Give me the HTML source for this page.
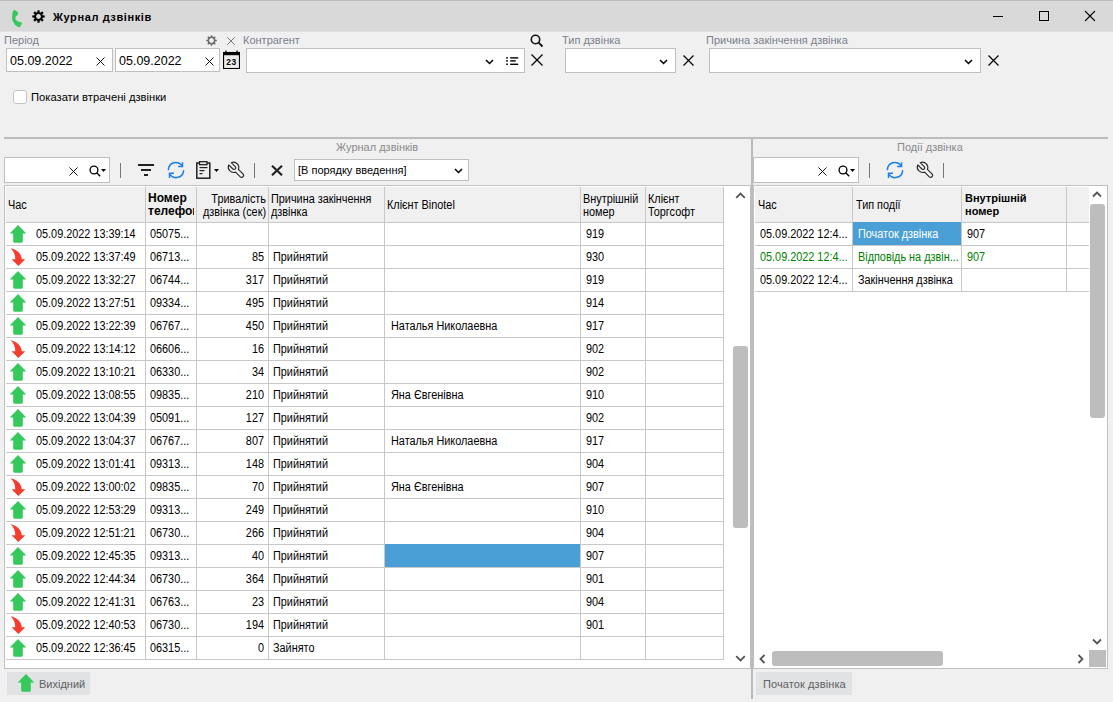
<!DOCTYPE html>
<html><head><meta charset="utf-8">
<style>
*{margin:0;padding:0;box-sizing:border-box}
html,body{width:1113px;height:702px;overflow:hidden;background:#f0f0f0;font-family:"Liberation Sans",sans-serif;font-size:11px;color:#000}
.a{position:absolute}
.t{position:absolute;white-space:nowrap;line-height:13px}
.lbl{color:#7b7f8e}
.inp{position:absolute;background:#fff;border:1px solid #bfbfbf}
.vl{position:absolute;background:#c8c8c8;width:1px}
.hl{position:absolute;background:#c8c8c8;height:1px}
.ar{position:absolute}
.c{position:absolute;white-space:nowrap;line-height:13px;font-size:12px;transform:scaleX(0.905);transform-origin:0 0}
.cr{position:absolute;white-space:nowrap;line-height:13px;font-size:12px;transform:scaleX(0.905);transform-origin:100% 0;text-align:right}
</style></head><body>

<div class="a" style="left:0;top:0;width:1113px;height:32px;background:#d9d9d9;border-top:1px solid #bbbbbb;border-bottom:1px solid #e2e2e2"></div>
<svg class="a" style="left:6px;top:6px" width="24" height="24" viewBox="0 0 24 24"><path d="M8.2 3.8 L12 6.2 Q12.3 7.2 11.6 8.9 L9.9 10.3 Q9 11.5 9.5 13 Q10.2 14.8 12 15.4 L15.7 16.4 Q16.2 17.3 15.7 18.1 L13.7 21.2 Q12.3 21 11.3 20.5 Q8.5 18.8 7.2 16 Q6 13.5 6.1 11 Q6.2 7.8 6.8 5.8 Q7.3 4.2 8.2 3.8 Z" fill="#35c85a"/></svg>
<svg class="a" style="left:32px;top:10px" width="13" height="13" viewBox="0 0 13 13"><circle cx="6.5" cy="6.5" r="4.4" fill="#000"/><rect x="5.4" y="0.2999999999999998" width="2.2" height="3.3" fill="#000" transform="rotate(0.0 6.5 6.5)"/><rect x="5.4" y="0.2999999999999998" width="2.2" height="3.3" fill="#000" transform="rotate(45.0 6.5 6.5)"/><rect x="5.4" y="0.2999999999999998" width="2.2" height="3.3" fill="#000" transform="rotate(90.0 6.5 6.5)"/><rect x="5.4" y="0.2999999999999998" width="2.2" height="3.3" fill="#000" transform="rotate(135.0 6.5 6.5)"/><rect x="5.4" y="0.2999999999999998" width="2.2" height="3.3" fill="#000" transform="rotate(180.0 6.5 6.5)"/><rect x="5.4" y="0.2999999999999998" width="2.2" height="3.3" fill="#000" transform="rotate(225.0 6.5 6.5)"/><rect x="5.4" y="0.2999999999999998" width="2.2" height="3.3" fill="#000" transform="rotate(270.0 6.5 6.5)"/><rect x="5.4" y="0.2999999999999998" width="2.2" height="3.3" fill="#000" transform="rotate(315.0 6.5 6.5)"/><circle cx="6.5" cy="6.5" r="2.4" fill="#d9d9d9"/></svg>
<div class="t" style="left:53px;top:11px;font-size:11px;font-weight:bold;letter-spacing:0.6px">Журнал дзвінків</div>
<div class="a" style="left:993px;top:16px;width:10px;height:1px;background:#000"></div>
<div class="a" style="left:1039px;top:11px;width:10px;height:10px;border:1px solid #000"></div>
<svg class="a" style="left:1084px;top:10px" width="12" height="12" viewBox="0 0 12 12"><path d="M1 1 L11 11 M11 1 L1 11" stroke="#000" stroke-width="1.1"/></svg>
<div class="t lbl" style="left:4px;top:34px">Період</div>
<svg class="a" style="left:206px;top:35px" width="11" height="11" viewBox="0 0 11 11"><circle cx="5.5" cy="5.5" r="3.2" stroke="#6a6a6a" stroke-width="1.5" fill="none"/><rect x="4.8" y="0.2" width="1.4" height="2.6" fill="#6a6a6a" transform="rotate(0 5.5 5.5)"/><rect x="4.8" y="0.2" width="1.4" height="2.6" fill="#6a6a6a" transform="rotate(45 5.5 5.5)"/><rect x="4.8" y="0.2" width="1.4" height="2.6" fill="#6a6a6a" transform="rotate(90 5.5 5.5)"/><rect x="4.8" y="0.2" width="1.4" height="2.6" fill="#6a6a6a" transform="rotate(135 5.5 5.5)"/><rect x="4.8" y="0.2" width="1.4" height="2.6" fill="#6a6a6a" transform="rotate(180 5.5 5.5)"/><rect x="4.8" y="0.2" width="1.4" height="2.6" fill="#6a6a6a" transform="rotate(225 5.5 5.5)"/><rect x="4.8" y="0.2" width="1.4" height="2.6" fill="#6a6a6a" transform="rotate(270 5.5 5.5)"/><rect x="4.8" y="0.2" width="1.4" height="2.6" fill="#6a6a6a" transform="rotate(315 5.5 5.5)"/></svg>
<svg class="a" style="left:227px;top:37px" width="8" height="8" viewBox="0 0 8 8"><path d="M0.3 0.3 L7.7 7.7 M7.7 0.3 L0.3 7.7" stroke="#7a7a7a" stroke-width="1"/></svg>
<div class="t lbl" style="left:243px;top:34px">Контрагент</div>
<div class="t lbl" style="left:562px;top:34px">Тип дзвінка</div>
<div class="t lbl" style="left:706px;top:34px">Причина закінчення дзвінка</div>
<svg class="a" style="left:530px;top:34px" width="14" height="14" viewBox="0 0 14 14"><circle cx="5.5" cy="5.5" r="4.2" stroke="#111" stroke-width="1.6" fill="none"/><path d="M8.6 8.6 L12.5 12.5" stroke="#111" stroke-width="1.8"/></svg>
<div class="inp" style="left:6px;top:48px;width:107px;height:24px"></div>
<div class="t" style="left:10px;top:54px;font-size:12.5px;line-height:14px">05.09.2022</div>
<svg class="a" style="left:96px;top:57px" width="9" height="9" viewBox="0 0 9 9"><path d="M0.5 0.5 L8.5 8.5 M8.5 0.5 L0.5 8.5" stroke="#111" stroke-width="1.0"/></svg>
<div class="inp" style="left:115px;top:48px;width:105px;height:24px"></div>
<div class="t" style="left:119px;top:54px;font-size:12.5px;line-height:14px">05.09.2022</div>
<svg class="a" style="left:205px;top:57px" width="9" height="9" viewBox="0 0 9 9"><path d="M0.5 0.5 L8.5 8.5 M8.5 0.5 L0.5 8.5" stroke="#111" stroke-width="1.0"/></svg>
<svg class="a" style="left:223px;top:50px" width="17" height="19" viewBox="0 0 17 19"><rect x="0.55" y="2.5" width="15.9" height="16" fill="#ececec" stroke="#000" stroke-width="1.1"/><rect x="0" y="2" width="17" height="3.2" fill="#000"/><rect x="2.3" y="0.6" width="1.3" height="2" fill="#000"/><rect x="13.4" y="0.6" width="1.3" height="2" fill="#000"/><text x="8.6" y="15" font-family="Liberation Sans" font-weight="bold" font-size="8.4" letter-spacing="0.7" text-anchor="middle" fill="#000">23</text></svg>
<div class="inp" style="left:246px;top:48px;width:279px;height:25px"></div>
<svg class="a" style="left:485px;top:59px" width="9" height="6" viewBox="0 0 9 6"><path d="M1 1 L4.5 4.5 L8 1" stroke="#000" stroke-width="1.5" fill="none"/></svg>
<svg class="a" style="left:505px;top:54px" width="15" height="13" viewBox="0 0 15 13"><rect x="1.2" y="3.1" width="1.6" height="1.6" fill="#000"/><rect x="1.2" y="6.1" width="1.6" height="1.6" fill="#000"/><rect x="1.2" y="9.5" width="1.6" height="1.6" fill="#000"/><rect x="5.2" y="3.2" width="8" height="1.4" fill="#000"/><rect x="5.2" y="6.2" width="5.5" height="1.4" fill="#000"/><rect x="5.2" y="9.6" width="8" height="1.4" fill="#000"/></svg>
<svg class="a" style="left:531px;top:54px" width="12" height="12" viewBox="0 0 12 12"><path d="M0.5 0.5 L11.5 11.5 M11.5 0.5 L0.5 11.5" stroke="#000" stroke-width="1.2"/></svg>
<div class="inp" style="left:565px;top:48px;width:111px;height:25px"></div>
<svg class="a" style="left:659px;top:59px" width="9" height="6" viewBox="0 0 9 6"><path d="M1 1 L4.5 4.5 L8 1" stroke="#000" stroke-width="1.5" fill="none"/></svg>
<svg class="a" style="left:683px;top:55px" width="11" height="11" viewBox="0 0 11 11"><path d="M0.5 0.5 L10.5 10.5 M10.5 0.5 L0.5 10.5" stroke="#000" stroke-width="1.2"/></svg>
<div class="inp" style="left:709px;top:48px;width:272px;height:25px"></div>
<svg class="a" style="left:964px;top:59px" width="9" height="6" viewBox="0 0 9 6"><path d="M1 1 L4.5 4.5 L8 1" stroke="#000" stroke-width="1.5" fill="none"/></svg>
<svg class="a" style="left:988px;top:55px" width="11" height="11" viewBox="0 0 11 11"><path d="M0.5 0.5 L10.5 10.5 M10.5 0.5 L0.5 10.5" stroke="#000" stroke-width="1.2"/></svg>
<div class="a" style="left:13px;top:90px;width:14px;height:14px;background:#fff;border:1px solid #c4c4c4;border-radius:3px"></div>
<div class="t" style="left:31px;top:91px;font-size:11.2px">Показати втрачені дзвінки</div>
<div class="a" style="left:4px;top:137px;width:1104px;height:2px;background:#bcbcbc"></div>
<div class="a" style="left:751px;top:139px;width:2px;height:560px;background:#bcbcbc"></div>
<div class="t" style="left:336px;top:141px;color:#8a8a8a">Журнал дзвінків</div>
<div class="t" style="left:897px;top:141px;color:#8a8a8a">Події дзвінка</div>
<div class="inp" style="left:4px;top:157px;width:106px;height:26px"></div>
<svg class="a" style="left:69px;top:167px" width="9" height="9" viewBox="0 0 9 9"><path d="M0.5 0.5 L8.5 8.5 M8.5 0.5 L0.5 8.5" stroke="#111" stroke-width="1.0"/></svg>
<svg class="a" style="left:89px;top:165px" width="19" height="13" viewBox="0 0 19 13"><circle cx="5" cy="5" r="3.9" stroke="#000" stroke-width="1.35" fill="none"/><path d="M7.7 7.7 L11.2 11.2" stroke="#000" stroke-width="1.4"/><path d="M12 4 L17 4 L14.5 7 Z" fill="#000"/></svg>
<div class="a" style="left:120px;top:163px;width:1px;height:15px;background:#777"></div>
<div class="a" style="left:138px;top:164px;width:16px;height:2px;background:#222"></div>
<div class="a" style="left:141px;top:169px;width:10px;height:2px;background:#222"></div>
<div class="a" style="left:144px;top:174px;width:4px;height:2px;background:#222"></div>
<svg class="a" style="left:164px;top:158px" width="24" height="24" viewBox="0 0 24 24"><g stroke="#1a7ff2" stroke-width="1.5" fill="none" stroke-linecap="round"><path d="M4.4 11.6 A7.6 7.6 0 0 1 17.9 7.3"/><path d="M18.5 4.2 L18.5 8.6 L14.1 8.6" stroke-linecap="butt"/><path d="M19.6 12.8 A7.6 7.6 0 0 1 6 16.6"/><path d="M5.5 19.9 L5.5 15.3 L10 15.3" stroke-linecap="butt"/></g></svg>
<svg class="a" style="left:196px;top:161px" width="24" height="18" viewBox="0 0 24 18"><rect x="0.8" y="2" width="13" height="15.2" fill="none" stroke="#222" stroke-width="1.5"/><rect x="3.5" y="0.7" width="7.5" height="3" fill="#f0f0f0" stroke="#222" stroke-width="1.3"/><rect x="3.5" y="6" width="8" height="1.2" fill="#222"/><rect x="3.5" y="9" width="5" height="1.2" fill="#222"/><rect x="3.5" y="12" width="3" height="1.2" fill="#222"/><path d="M18 8 L23 8 L20.5 11 Z" fill="#000"/></svg>
<svg class="a" style="left:224px;top:158px" width="24" height="24" viewBox="0 0 24 24"><path d="M7.3 4.7 Q10.8 3.3 13.4 5.9 Q15.6 8.4 14.4 11.4 L19.2 16.2 Q20.2 17.6 19 18.8 Q17.7 20 16.3 18.9 L11.6 14.2 Q8.2 15.2 5.7 12.7 Q3.4 10.2 4.8 6.9 L8.9 11 Q10.3 12 11.3 10.9 Q12.3 9.7 11.2 8.6 Z" stroke="#2a2a2a" stroke-width="1.2" fill="none" stroke-linejoin="round"/></svg>
<div class="a" style="left:254px;top:163px;width:1px;height:15px;background:#777"></div>
<svg class="a" style="left:271px;top:165px" width="12" height="11" viewBox="0 0 12 11"><path d="M1 0.8 L11 10.2 M11 0.8 L1 10.2" stroke="#222" stroke-width="2.2"/></svg>
<div class="inp" style="left:294px;top:159px;width:175px;height:22px"></div>
<div class="t" style="left:298px;top:164px">[В порядку введення]</div>
<svg class="a" style="left:454px;top:168px" width="9" height="6" viewBox="0 0 9 6"><path d="M1 1 L4.5 4.5 L8 1" stroke="#000" stroke-width="1.5" fill="none"/></svg>
<div class="inp" style="left:753px;top:157px;width:106px;height:26px"></div>
<svg class="a" style="left:818px;top:167px" width="9" height="9" viewBox="0 0 9 9"><path d="M0.5 0.5 L8.5 8.5 M8.5 0.5 L0.5 8.5" stroke="#111" stroke-width="1.0"/></svg>
<svg class="a" style="left:838px;top:165px" width="19" height="13" viewBox="0 0 19 13"><circle cx="5" cy="5" r="3.9" stroke="#000" stroke-width="1.35" fill="none"/><path d="M7.7 7.7 L11.2 11.2" stroke="#000" stroke-width="1.4"/><path d="M12 4 L17 4 L14.5 7 Z" fill="#000"/></svg>
<div class="a" style="left:869px;top:163px;width:1px;height:15px;background:#777"></div>
<svg class="a" style="left:883px;top:158px" width="24" height="24" viewBox="0 0 24 24"><g stroke="#1a7ff2" stroke-width="1.5" fill="none" stroke-linecap="round"><path d="M4.4 11.6 A7.6 7.6 0 0 1 17.9 7.3"/><path d="M18.5 4.2 L18.5 8.6 L14.1 8.6" stroke-linecap="butt"/><path d="M19.6 12.8 A7.6 7.6 0 0 1 6 16.6"/><path d="M5.5 19.9 L5.5 15.3 L10 15.3" stroke-linecap="butt"/></g></svg>
<svg class="a" style="left:913px;top:158px" width="24" height="24" viewBox="0 0 24 24"><path d="M7.3 4.7 Q10.8 3.3 13.4 5.9 Q15.6 8.4 14.4 11.4 L19.2 16.2 Q20.2 17.6 19 18.8 Q17.7 20 16.3 18.9 L11.6 14.2 Q8.2 15.2 5.7 12.7 Q3.4 10.2 4.8 6.9 L8.9 11 Q10.3 12 11.3 10.9 Q12.3 9.7 11.2 8.6 Z" stroke="#2a2a2a" stroke-width="1.2" fill="none" stroke-linejoin="round"/></svg>
<div class="a" style="left:943px;top:163px;width:1px;height:15px;background:#777"></div>
<div class="a" style="left:4px;top:185px;width:747px;height:484px;background:#fff;border:1px solid #c0c0c0"></div>
<div class="a" style="left:6px;top:187px;width:717px;height:35px;background:#f0f0f0"></div>
<div class="hl" style="left:6px;top:222px;width:717px"></div>
<div class="vl" style="left:145px;top:187px;height:473px"></div>
<div class="vl" style="left:196px;top:187px;height:473px"></div>
<div class="vl" style="left:268px;top:187px;height:473px"></div>
<div class="vl" style="left:384px;top:187px;height:473px"></div>
<div class="vl" style="left:580px;top:187px;height:473px"></div>
<div class="vl" style="left:645px;top:187px;height:473px"></div>
<div class="vl" style="left:723px;top:187px;height:473px"></div>
<div class="c" style="left:8px;top:199px">Час</div>
<div class="a" style="left:148px;top:192px;width:46px;overflow:hidden;white-space:nowrap;font-weight:bold;line-height:13px;font-size:12px">Номер<br>телефону</div>
<div class="cr" style="left:166px;top:193px;width:100px">Тривалість<br>дзвінка (сек)</div>
<div class="c" style="left:271px;top:193px">Причина закінчення<br>дзвінка</div>
<div class="c" style="left:387px;top:199px">Клієнт Binotel</div>
<div class="c" style="left:583px;top:193px">Внутрішній<br>номер</div>
<div class="c" style="left:648px;top:193px">Клієнт<br>Торгсофт</div>
<div class="hl" style="left:6px;top:245px;width:717px"></div>
<svg class="ar" style="left:9px;top:225px" width="18" height="19" viewBox="0 0 18 19"><path d="M9 0 L17.3 8.6 L13.8 8.6 L13.8 16.3 Q13.8 17.8 12.3 17.8 L5.7 17.8 Q4.2 17.8 4.2 16.3 L4.2 8.6 L0.7 8.6 Z" fill="#35c85a"/></svg>
<div class="c" style="left:36px;top:228px">05.09.2022 13:39:14</div>
<div class="c" style="left:150px;top:228px">05075...</div>
<div class="c" style="left:586px;top:228px">919</div>
<div class="hl" style="left:6px;top:268px;width:717px"></div>
<svg class="ar" style="left:9px;top:248px" width="18" height="19" viewBox="0 0 18 19"><path d="M1.7 0.2 C7.5 1.5 12.5 5 12.7 11.3 L16.3 11.3 L9.35 18 L2.6 11.3 L6.3 11.3 C6.3 6.5 4.5 3 1.7 0.2 Z" fill="#f63c2e"/></svg>
<div class="c" style="left:36px;top:251px">05.09.2022 13:37:49</div>
<div class="c" style="left:150px;top:251px">06713...</div>
<div class="cr" style="left:164px;width:100px;top:251px">85</div>
<div class="c" style="left:273px;top:251px">Прийнятий</div>
<div class="c" style="left:586px;top:251px">930</div>
<div class="hl" style="left:6px;top:291px;width:717px"></div>
<svg class="ar" style="left:9px;top:271px" width="18" height="19" viewBox="0 0 18 19"><path d="M9 0 L17.3 8.6 L13.8 8.6 L13.8 16.3 Q13.8 17.8 12.3 17.8 L5.7 17.8 Q4.2 17.8 4.2 16.3 L4.2 8.6 L0.7 8.6 Z" fill="#35c85a"/></svg>
<div class="c" style="left:36px;top:274px">05.09.2022 13:32:27</div>
<div class="c" style="left:150px;top:274px">06744...</div>
<div class="cr" style="left:164px;width:100px;top:274px">317</div>
<div class="c" style="left:273px;top:274px">Прийнятий</div>
<div class="c" style="left:586px;top:274px">919</div>
<div class="hl" style="left:6px;top:314px;width:717px"></div>
<svg class="ar" style="left:9px;top:294px" width="18" height="19" viewBox="0 0 18 19"><path d="M9 0 L17.3 8.6 L13.8 8.6 L13.8 16.3 Q13.8 17.8 12.3 17.8 L5.7 17.8 Q4.2 17.8 4.2 16.3 L4.2 8.6 L0.7 8.6 Z" fill="#35c85a"/></svg>
<div class="c" style="left:36px;top:297px">05.09.2022 13:27:51</div>
<div class="c" style="left:150px;top:297px">09334...</div>
<div class="cr" style="left:164px;width:100px;top:297px">495</div>
<div class="c" style="left:273px;top:297px">Прийнятий</div>
<div class="c" style="left:586px;top:297px">914</div>
<div class="hl" style="left:6px;top:337px;width:717px"></div>
<svg class="ar" style="left:9px;top:317px" width="18" height="19" viewBox="0 0 18 19"><path d="M9 0 L17.3 8.6 L13.8 8.6 L13.8 16.3 Q13.8 17.8 12.3 17.8 L5.7 17.8 Q4.2 17.8 4.2 16.3 L4.2 8.6 L0.7 8.6 Z" fill="#35c85a"/></svg>
<div class="c" style="left:36px;top:320px">05.09.2022 13:22:39</div>
<div class="c" style="left:150px;top:320px">06767...</div>
<div class="cr" style="left:164px;width:100px;top:320px">450</div>
<div class="c" style="left:273px;top:320px">Прийнятий</div>
<div class="c" style="left:391px;top:320px">Наталья Николаевна</div>
<div class="c" style="left:586px;top:320px">917</div>
<div class="hl" style="left:6px;top:360px;width:717px"></div>
<svg class="ar" style="left:9px;top:340px" width="18" height="19" viewBox="0 0 18 19"><path d="M1.7 0.2 C7.5 1.5 12.5 5 12.7 11.3 L16.3 11.3 L9.35 18 L2.6 11.3 L6.3 11.3 C6.3 6.5 4.5 3 1.7 0.2 Z" fill="#f63c2e"/></svg>
<div class="c" style="left:36px;top:343px">05.09.2022 13:14:12</div>
<div class="c" style="left:150px;top:343px">06606...</div>
<div class="cr" style="left:164px;width:100px;top:343px">16</div>
<div class="c" style="left:273px;top:343px">Прийнятий</div>
<div class="c" style="left:586px;top:343px">902</div>
<div class="hl" style="left:6px;top:383px;width:717px"></div>
<svg class="ar" style="left:9px;top:363px" width="18" height="19" viewBox="0 0 18 19"><path d="M9 0 L17.3 8.6 L13.8 8.6 L13.8 16.3 Q13.8 17.8 12.3 17.8 L5.7 17.8 Q4.2 17.8 4.2 16.3 L4.2 8.6 L0.7 8.6 Z" fill="#35c85a"/></svg>
<div class="c" style="left:36px;top:366px">05.09.2022 13:10:21</div>
<div class="c" style="left:150px;top:366px">06330...</div>
<div class="cr" style="left:164px;width:100px;top:366px">34</div>
<div class="c" style="left:273px;top:366px">Прийнятий</div>
<div class="c" style="left:586px;top:366px">902</div>
<div class="hl" style="left:6px;top:406px;width:717px"></div>
<svg class="ar" style="left:9px;top:386px" width="18" height="19" viewBox="0 0 18 19"><path d="M9 0 L17.3 8.6 L13.8 8.6 L13.8 16.3 Q13.8 17.8 12.3 17.8 L5.7 17.8 Q4.2 17.8 4.2 16.3 L4.2 8.6 L0.7 8.6 Z" fill="#35c85a"/></svg>
<div class="c" style="left:36px;top:389px">05.09.2022 13:08:55</div>
<div class="c" style="left:150px;top:389px">09835...</div>
<div class="cr" style="left:164px;width:100px;top:389px">210</div>
<div class="c" style="left:273px;top:389px">Прийнятий</div>
<div class="c" style="left:391px;top:389px">Яна Євгенівна</div>
<div class="c" style="left:586px;top:389px">910</div>
<div class="hl" style="left:6px;top:429px;width:717px"></div>
<svg class="ar" style="left:9px;top:409px" width="18" height="19" viewBox="0 0 18 19"><path d="M9 0 L17.3 8.6 L13.8 8.6 L13.8 16.3 Q13.8 17.8 12.3 17.8 L5.7 17.8 Q4.2 17.8 4.2 16.3 L4.2 8.6 L0.7 8.6 Z" fill="#35c85a"/></svg>
<div class="c" style="left:36px;top:412px">05.09.2022 13:04:39</div>
<div class="c" style="left:150px;top:412px">05091...</div>
<div class="cr" style="left:164px;width:100px;top:412px">127</div>
<div class="c" style="left:273px;top:412px">Прийнятий</div>
<div class="c" style="left:586px;top:412px">902</div>
<div class="hl" style="left:6px;top:452px;width:717px"></div>
<svg class="ar" style="left:9px;top:432px" width="18" height="19" viewBox="0 0 18 19"><path d="M9 0 L17.3 8.6 L13.8 8.6 L13.8 16.3 Q13.8 17.8 12.3 17.8 L5.7 17.8 Q4.2 17.8 4.2 16.3 L4.2 8.6 L0.7 8.6 Z" fill="#35c85a"/></svg>
<div class="c" style="left:36px;top:435px">05.09.2022 13:04:37</div>
<div class="c" style="left:150px;top:435px">06767...</div>
<div class="cr" style="left:164px;width:100px;top:435px">807</div>
<div class="c" style="left:273px;top:435px">Прийнятий</div>
<div class="c" style="left:391px;top:435px">Наталья Николаевна</div>
<div class="c" style="left:586px;top:435px">917</div>
<div class="hl" style="left:6px;top:475px;width:717px"></div>
<svg class="ar" style="left:9px;top:455px" width="18" height="19" viewBox="0 0 18 19"><path d="M9 0 L17.3 8.6 L13.8 8.6 L13.8 16.3 Q13.8 17.8 12.3 17.8 L5.7 17.8 Q4.2 17.8 4.2 16.3 L4.2 8.6 L0.7 8.6 Z" fill="#35c85a"/></svg>
<div class="c" style="left:36px;top:458px">05.09.2022 13:01:41</div>
<div class="c" style="left:150px;top:458px">09313...</div>
<div class="cr" style="left:164px;width:100px;top:458px">148</div>
<div class="c" style="left:273px;top:458px">Прийнятий</div>
<div class="c" style="left:586px;top:458px">904</div>
<div class="hl" style="left:6px;top:498px;width:717px"></div>
<svg class="ar" style="left:9px;top:478px" width="18" height="19" viewBox="0 0 18 19"><path d="M1.7 0.2 C7.5 1.5 12.5 5 12.7 11.3 L16.3 11.3 L9.35 18 L2.6 11.3 L6.3 11.3 C6.3 6.5 4.5 3 1.7 0.2 Z" fill="#f63c2e"/></svg>
<div class="c" style="left:36px;top:481px">05.09.2022 13:00:02</div>
<div class="c" style="left:150px;top:481px">09835...</div>
<div class="cr" style="left:164px;width:100px;top:481px">70</div>
<div class="c" style="left:273px;top:481px">Прийнятий</div>
<div class="c" style="left:391px;top:481px">Яна Євгенівна</div>
<div class="c" style="left:586px;top:481px">907</div>
<div class="hl" style="left:6px;top:521px;width:717px"></div>
<svg class="ar" style="left:9px;top:501px" width="18" height="19" viewBox="0 0 18 19"><path d="M9 0 L17.3 8.6 L13.8 8.6 L13.8 16.3 Q13.8 17.8 12.3 17.8 L5.7 17.8 Q4.2 17.8 4.2 16.3 L4.2 8.6 L0.7 8.6 Z" fill="#35c85a"/></svg>
<div class="c" style="left:36px;top:504px">05.09.2022 12:53:29</div>
<div class="c" style="left:150px;top:504px">09313...</div>
<div class="cr" style="left:164px;width:100px;top:504px">249</div>
<div class="c" style="left:273px;top:504px">Прийнятий</div>
<div class="c" style="left:586px;top:504px">910</div>
<div class="hl" style="left:6px;top:544px;width:717px"></div>
<svg class="ar" style="left:9px;top:524px" width="18" height="19" viewBox="0 0 18 19"><path d="M1.7 0.2 C7.5 1.5 12.5 5 12.7 11.3 L16.3 11.3 L9.35 18 L2.6 11.3 L6.3 11.3 C6.3 6.5 4.5 3 1.7 0.2 Z" fill="#f63c2e"/></svg>
<div class="c" style="left:36px;top:527px">05.09.2022 12:51:21</div>
<div class="c" style="left:150px;top:527px">06730...</div>
<div class="cr" style="left:164px;width:100px;top:527px">266</div>
<div class="c" style="left:273px;top:527px">Прийнятий</div>
<div class="c" style="left:586px;top:527px">904</div>
<div class="hl" style="left:6px;top:567px;width:717px"></div>
<svg class="ar" style="left:9px;top:547px" width="18" height="19" viewBox="0 0 18 19"><path d="M9 0 L17.3 8.6 L13.8 8.6 L13.8 16.3 Q13.8 17.8 12.3 17.8 L5.7 17.8 Q4.2 17.8 4.2 16.3 L4.2 8.6 L0.7 8.6 Z" fill="#35c85a"/></svg>
<div class="c" style="left:36px;top:550px">05.09.2022 12:45:35</div>
<div class="c" style="left:150px;top:550px">09313...</div>
<div class="cr" style="left:164px;width:100px;top:550px">40</div>
<div class="c" style="left:273px;top:550px">Прийнятий</div>
<div class="a" style="left:385px;top:544px;width:195px;height:23px;background:#4aa0d6"></div>
<div class="c" style="left:586px;top:550px">907</div>
<div class="hl" style="left:6px;top:590px;width:717px"></div>
<svg class="ar" style="left:9px;top:570px" width="18" height="19" viewBox="0 0 18 19"><path d="M9 0 L17.3 8.6 L13.8 8.6 L13.8 16.3 Q13.8 17.8 12.3 17.8 L5.7 17.8 Q4.2 17.8 4.2 16.3 L4.2 8.6 L0.7 8.6 Z" fill="#35c85a"/></svg>
<div class="c" style="left:36px;top:573px">05.09.2022 12:44:34</div>
<div class="c" style="left:150px;top:573px">06730...</div>
<div class="cr" style="left:164px;width:100px;top:573px">364</div>
<div class="c" style="left:273px;top:573px">Прийнятий</div>
<div class="c" style="left:586px;top:573px">901</div>
<div class="hl" style="left:6px;top:613px;width:717px"></div>
<svg class="ar" style="left:9px;top:593px" width="18" height="19" viewBox="0 0 18 19"><path d="M9 0 L17.3 8.6 L13.8 8.6 L13.8 16.3 Q13.8 17.8 12.3 17.8 L5.7 17.8 Q4.2 17.8 4.2 16.3 L4.2 8.6 L0.7 8.6 Z" fill="#35c85a"/></svg>
<div class="c" style="left:36px;top:596px">05.09.2022 12:41:31</div>
<div class="c" style="left:150px;top:596px">06763...</div>
<div class="cr" style="left:164px;width:100px;top:596px">23</div>
<div class="c" style="left:273px;top:596px">Прийнятий</div>
<div class="c" style="left:586px;top:596px">904</div>
<div class="hl" style="left:6px;top:636px;width:717px"></div>
<svg class="ar" style="left:9px;top:616px" width="18" height="19" viewBox="0 0 18 19"><path d="M1.7 0.2 C7.5 1.5 12.5 5 12.7 11.3 L16.3 11.3 L9.35 18 L2.6 11.3 L6.3 11.3 C6.3 6.5 4.5 3 1.7 0.2 Z" fill="#f63c2e"/></svg>
<div class="c" style="left:36px;top:619px">05.09.2022 12:40:53</div>
<div class="c" style="left:150px;top:619px">06730...</div>
<div class="cr" style="left:164px;width:100px;top:619px">194</div>
<div class="c" style="left:273px;top:619px">Прийнятий</div>
<div class="c" style="left:586px;top:619px">901</div>
<div class="hl" style="left:6px;top:659px;width:717px"></div>
<svg class="ar" style="left:9px;top:639px" width="18" height="19" viewBox="0 0 18 19"><path d="M9 0 L17.3 8.6 L13.8 8.6 L13.8 16.3 Q13.8 17.8 12.3 17.8 L5.7 17.8 Q4.2 17.8 4.2 16.3 L4.2 8.6 L0.7 8.6 Z" fill="#35c85a"/></svg>
<div class="c" style="left:36px;top:642px">05.09.2022 12:36:45</div>
<div class="c" style="left:150px;top:642px">06315...</div>
<div class="cr" style="left:164px;width:100px;top:642px">0</div>
<div class="c" style="left:273px;top:642px">Зайнято</div>
<svg class="a" style="left:735px;top:192px" width="11" height="7" viewBox="0 0 11 7"><path d="M1.2 5.8 L5.5 1.5 L9.8 5.8" stroke="#555" stroke-width="1.8" fill="none"/></svg>
<svg class="a" style="left:735px;top:655px" width="11" height="7" viewBox="0 0 11 7"><path d="M1.2 1.2 L5.5 5.5 L9.8 1.2" stroke="#555" stroke-width="1.8" fill="none"/></svg>
<div class="a" style="left:733px;top:346px;width:15px;height:182px;background:#bdbdbd;border-radius:3px"></div>
<div class="a" style="left:753px;top:185px;width:355px;height:484px;background:#fff;border:1px solid #c0c0c0"></div>
<div class="a" style="left:755px;top:187px;width:334px;height:35px;background:#f0f0f0"></div>
<div class="hl" style="left:755px;top:222px;width:334px"></div>
<div class="vl" style="left:852px;top:187px;height:104px"></div>
<div class="vl" style="left:961px;top:187px;height:104px"></div>
<div class="vl" style="left:1066px;top:187px;height:104px"></div>
<div class="c" style="left:758px;top:199px">Час</div>
<div class="c" style="left:856px;top:199px">Тип події</div>
<div class="t" style="left:965px;top:192px;font-weight:bold;font-size:11px">Внутрішній<br>номер</div>
<div class="hl" style="left:755px;top:245px;width:334px"></div>
<div class="a" style="left:853px;top:222px;width:108px;height:23px;background:#4aa0d6"></div>
<div class="c" style="left:760px;top:228px;color:#000">05.09.2022 12:4...</div>
<div class="c" style="left:858px;top:228px;color:#fff">Початок дзвінка</div>
<div class="c" style="left:967px;top:228px;color:#000">907</div>
<div class="hl" style="left:755px;top:268px;width:334px"></div>
<div class="c" style="left:760px;top:251px;color:#008000">05.09.2022 12:4...</div>
<div class="c" style="left:858px;top:251px;color:#008000">Відповідь на дзвін...</div>
<div class="c" style="left:967px;top:251px;color:#008000">907</div>
<div class="hl" style="left:755px;top:291px;width:334px"></div>
<div class="c" style="left:760px;top:274px;color:#000">05.09.2022 12:4...</div>
<div class="c" style="left:858px;top:274px;color:#000">Закінчення дзвінка</div>
<svg class="a" style="left:1092px;top:191px" width="10" height="7" viewBox="0 0 10 7"><path d="M1 5.5 L5 1.5 L9 5.5" stroke="#555" stroke-width="1.8" fill="none"/></svg>
<div class="a" style="left:1090px;top:204px;width:15px;height:214px;background:#bdbdbd;border-radius:3px"></div>
<svg class="a" style="left:1092px;top:638px" width="10" height="7" viewBox="0 0 10 7"><path d="M1 1.5 L5 5.5 L9 1.5" stroke="#555" stroke-width="1.8" fill="none"/></svg>
<svg class="a" style="left:759px;top:654px" width="7" height="10" viewBox="0 0 7 10"><path d="M5.5 1 L1.5 5 L5.5 9" stroke="#555" stroke-width="1.8" fill="none"/></svg>
<svg class="a" style="left:1077px;top:654px" width="7" height="10" viewBox="0 0 7 10"><path d="M1.5 1 L5.5 5 L1.5 9" stroke="#555" stroke-width="1.8" fill="none"/></svg>
<div class="a" style="left:772px;top:651px;width:171px;height:15px;background:#bdbdbd;border-radius:3px"></div>
<div class="a" style="left:1089px;top:650px;width:17px;height:17px;background:#bdbdbd"></div>
<div class="a" style="left:7px;top:672px;width:83px;height:23px;background:#e1e2e4"></div>
<svg class="ar" style="left:17px;top:674px" width="18" height="19" viewBox="0 0 18 19"><path d="M9 0 L17.3 8.6 L13.8 8.6 L13.8 16.3 Q13.8 17.8 12.3 17.8 L5.7 17.8 Q4.2 17.8 4.2 16.3 L4.2 8.6 L0.7 8.6 Z" fill="#35c85a"/></svg>
<div class="t" style="left:39px;top:678px;color:#606060">Вихідний</div>
<div class="a" style="left:756px;top:672px;width:96px;height:23px;background:#e1e2e4"></div>
<div class="t" style="left:763px;top:678px;color:#606060;letter-spacing:0.1px">Початок дзвінка</div>
</body></html>
